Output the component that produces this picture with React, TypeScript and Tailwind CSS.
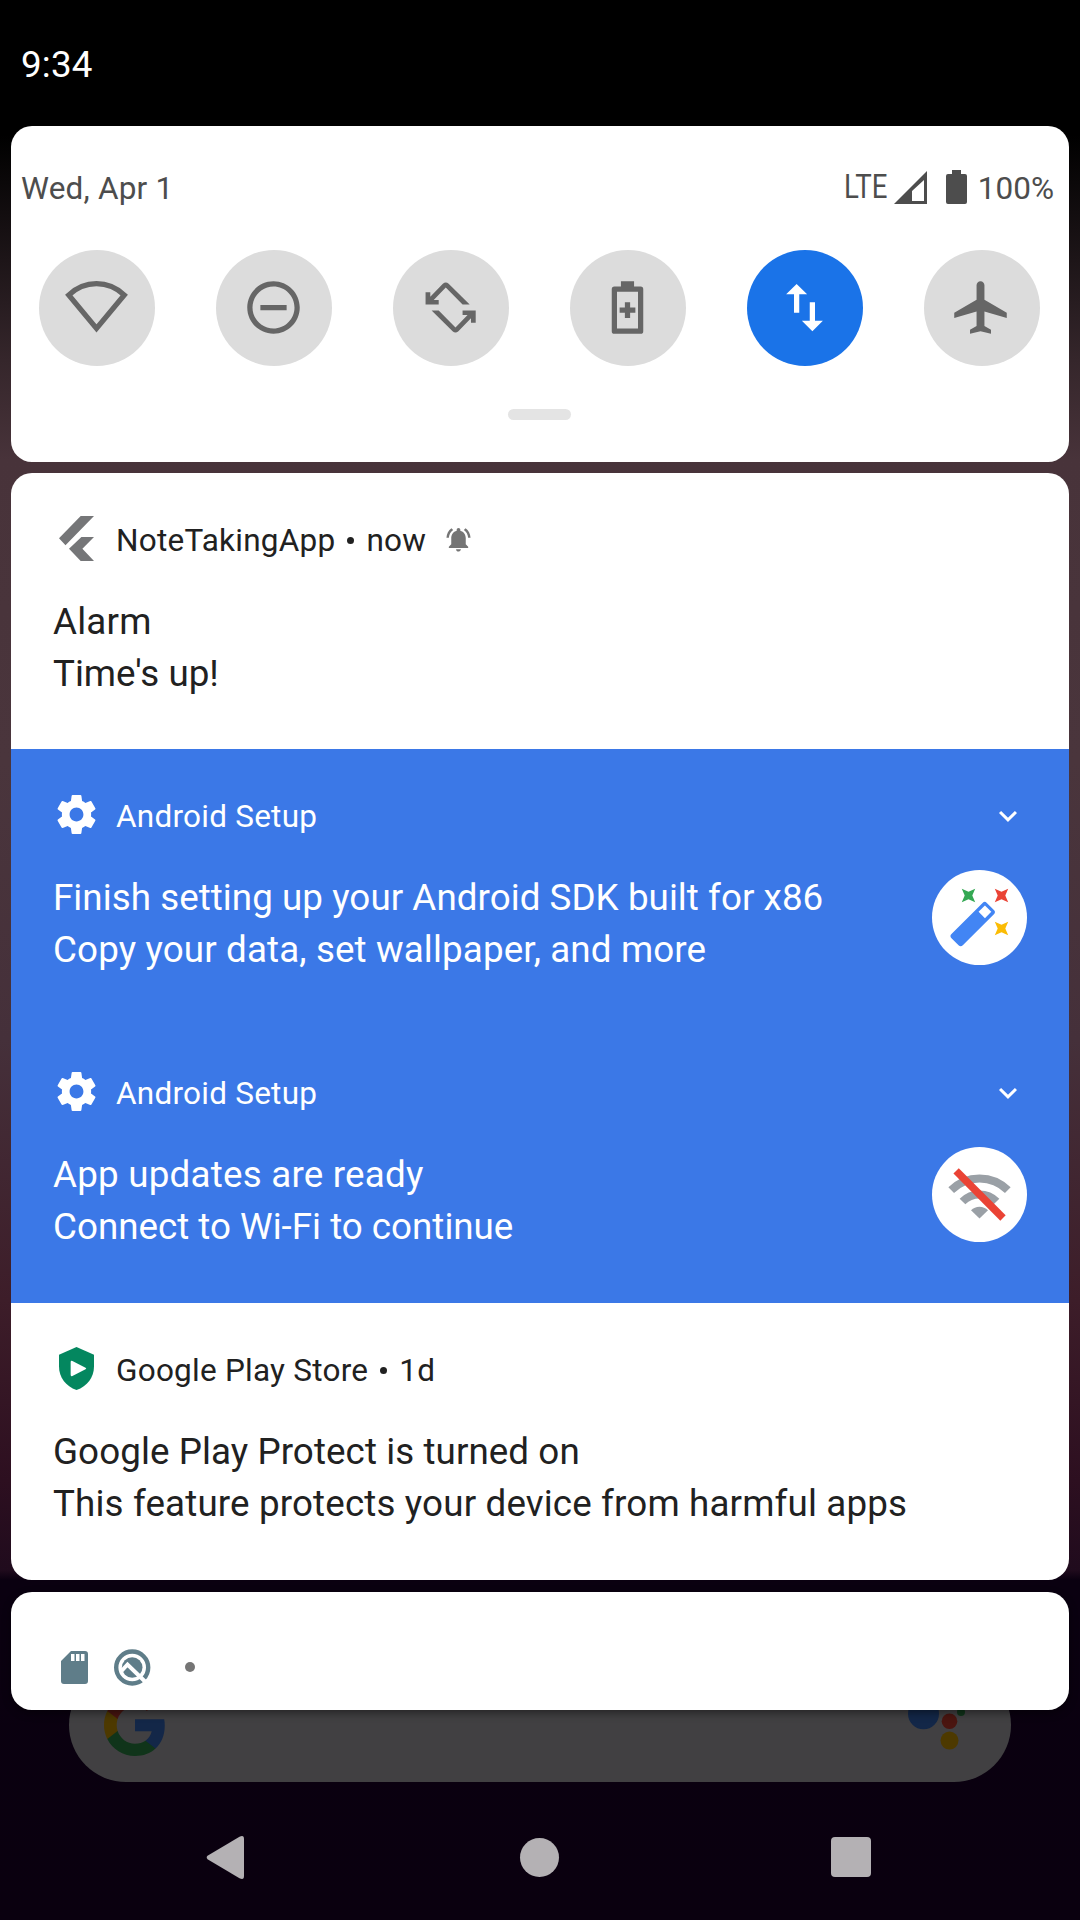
import React from "react";

function Circle({ on = false, children }: { on?: boolean; children: React.ReactNode }) {
  return (
    <div className={`flex h-[116px] w-[116px] items-center justify-center rounded-full ${on ? "bg-[#1a73e8] text-white" : "bg-[#dcdcdc] text-[#666666]"}`}>
      {children}
    </div>
  );
}

function QsIcon({ children, className = "mr-px" }: { children: React.ReactNode; className?: string }) {
  return (
    <svg viewBox="0 0 24 24" className={`mb-px h-[63px] w-[63px] ${className}`} fill="currentColor">
      {children}
    </svg>
  );
}

const ROTATE = "M2.5 6.2h1.8v1.7l4.8-4.9q1.1-1.1 2.2 0l8 7.9h-2.7l-6.4-6.5-4.6 4.7h1.9v1.8h-5z";

function QuickSettings() {
  return (
    <section className="h-[336px] rounded-[21px] bg-white">
      <div className="flex h-[124px] items-center justify-between pl-[10px] pr-[15px] text-[#4d4d4d]">
        <span className="text-[31.5px] leading-[37px] tracking-[0.2px]">Wed, Apr 1</span>
        <div className="flex items-center text-[31.5px] leading-[37px]">
          <span className="w-[44px] origin-left scale-x-[0.85] whitespace-nowrap pb-[2px] text-[32.5px]">LTE</span>
          <svg width="33" height="33" viewBox="0 0 33 33" className="mb-[2px] ml-[6px]" fill="currentColor">
            <path fillRule="evenodd" d="M0 33 33 0v33zM18 30h12V9L18 20z" />
          </svg>
          <svg width="21" height="34" viewBox="0 0 21 34" className="mb-[2px] ml-[19px] mr-[11px]" fill="currentColor">
            <path d="M6 0h9v4h4q2 0 2 2v26q0 2-2 2H2q-2 0-2-2V6q0-2 2-2h4z" />
          </svg>
          <span>100%</span>
        </div>
      </div>
      <div className="flex justify-between pl-7 pr-[29px]">
        <Circle>
          <QsIcon>
            <path d="M1.4 7.25C4.3 4.5 8 2.9 12 2.9s7.7 1.6 10.6 4.35L12 20z" fill="none" stroke="currentColor" strokeWidth="2" />
          </QsIcon>
        </Circle>
        <Circle>
          <QsIcon>
            <path d="M7 11v2h10v-2H7zm5-9C6.48 2 2 6.48 2 12s4.48 10 10 10 10-4.48 10-10S17.52 2 12 2zm0 18c-4.41 0-8-3.59-8-8s3.59-8 8-8 8 3.59 8 8-3.59 8-8 8z" />
          </QsIcon>
        </Circle>
        <Circle>
          <QsIcon>
            <path d={ROTATE} />
            <path d={ROTATE} transform="rotate(180 12.05 12)" />
          </QsIcon>
        </Circle>
        <Circle>
          <QsIcon>
            <path fillRule="evenodd" d="M9.5 2h5v2H17q1 0 1 1v16q0 1-1 1H7q-1 0-1-1V5q0-1 1-1h2.5zM8 6v14h8V6z" />
            <path d="M11 10h2v2h2v2h-2v2h-2v-2H9v-2h2z" />
          </QsIcon>
        </Circle>
        <Circle on>
          <QsIcon>
            <path d="M9 3L5 6.99h3V14h2V6.99h3L9 3zm7 14.01V10h-2v7.01h-3L15 21l4-3.99h-3z" />
          </QsIcon>
        </Circle>
        <Circle>
          <QsIcon className="mr-[3px]">
            <path d="M22 16v-2l-8.5-5V3.5C13.5 2.67 12.83 2 12 2s-1.5.67-1.5 1.5V9L2 14v2l8.5-2.5V19L8 20.5V22l4-1 4 1v-1.5L13.5 19v-5.5L22 16z" />
          </QsIcon>
        </Circle>
      </div>
      <div className="mx-auto mt-[43px] h-[11px] w-[63px] -translate-x-px rounded-full bg-[#e4e4e4]" />
    </section>
  );
}

function Gear() {
  return (
    <svg viewBox="2.4 2.4 19.2 19.2" className="mb-[2px] h-[39px] w-[39px]" fill="currentColor">
      <path d="M19.14 12.94c.04-.3.06-.61.06-.94 0-.32-.02-.64-.07-.94l2.03-1.58c.18-.14.23-.41.12-.61l-1.92-3.32c-.12-.22-.37-.29-.59-.22l-2.39.96c-.5-.38-1.03-.7-1.62-.94L14.4 2.81c-.04-.24-.24-.41-.48-.41h-3.84c-.24 0-.43.17-.47.41l-.36 2.54c-.59.24-1.13.57-1.62.94l-2.39-.96c-.22-.08-.47 0-.59.22L2.74 8.87c-.12.21-.08.47.12.61l2.03 1.58c-.05.3-.09.63-.09.94s.02.64.07.94l-2.03 1.58c-.18.14-.23.41-.12.61l1.92 3.32c.12.22.37.29.59.22l2.39-.96c.5.38 1.03.7 1.62.94l.36 2.54c.05.24.24.41.48.41h3.84c.24 0 .44-.17.47-.41l.36-2.54c.59-.24 1.13-.56 1.62-.94l2.39.96c.22.08.47 0 .59-.22l1.92-3.32c.12-.22.07-.47-.12-.61l-2.01-1.58zM12 15.4c-1.88 0-3.4-1.52-3.4-3.4s1.52-3.4 3.4-3.4 3.4 1.52 3.4 3.4-1.52 3.4-3.4 3.4z" />
    </svg>
  );
}

function FlutterMark() {
  return (
    <svg viewBox="0 0 35 45" className="mb-[2px] h-[45px] w-[35px]" fill="#757678">
      <path d="M21.7 0H35L6.5 29.3 0 22.3zM22.4 21H35L23.4 32.7 35 45H21.7L10 32.7z" />
    </svg>
  );
}

function Shield() {
  return (
    <svg viewBox="0 0 36 44" className="mb-[2px] h-[43px] w-[35px]" preserveAspectRatio="none">
      <path d="M18 0 36 8v12c0 11-7 20.5-18 24C7 40.5 0 31 0 20V8z" fill="#04875f" />
      <path d="M12 15.5q0-2 1.8-1.2l13.5 6.9q1.5.8 0 1.6l-13.5 6.9q-1.8.8-1.8-1.2z" fill="#fff" />
    </svg>
  );
}

function Bell() {
  return (
    <svg viewBox="0 0 24 24" className="mb-[2px] ml-[18px] h-[29px] w-[29px]" fill="#757575">
      <path d="M7.58 4.08L6.15 2.65C3.75 4.48 2.17 7.3 2.03 10.5h2c.15-2.65 1.51-4.97 3.55-6.42zm12.39 6.42h2c-.15-3.2-1.73-6.02-4.12-7.85l-1.42 1.43c2.02 1.45 3.39 3.77 3.54 6.42zM18 11c0-3.07-1.64-5.64-4.5-6.32V4c0-.83-.67-1.5-1.5-1.5s-1.5.67-1.5 1.5v.68C7.63 5.36 6 7.92 6 11v5l-2 2v1h16v-1l-2-2v-5zm-6 11c.14 0 .27-.01.4-.04.65-.14 1.18-.58 1.44-1.18.1-.24.15-.5.15-.78h-4c.01 1.1.9 2 2.01 2z" />
    </svg>
  );
}

function Chevron() {
  return (
    <svg viewBox="0 0 24 24" className="ml-auto mr-px mt-px h-9 w-9" fill="none" stroke="currentColor" strokeWidth="2">
      <path d="M6.7 9.3 12 14.6l5.3-5.3" />
    </svg>
  );
}

const SPARK = "M-6.7-6.7 0-3.8 6.7-6.7 3.8 0 6.7 6.7 0 3.8-6.7 6.7-3.8 0z";

function Wand() {
  return (
    <svg viewBox="0 0 95 95" className="h-[95px] w-[95px]">
      <circle cx="47.5" cy="47.5" r="47.5" fill="#fff" />
      <path d={SPARK} transform="translate(36.5 25.5)" fill="#34a853" />
      <path d={SPARK} transform="translate(69.5 25.5)" fill="#ea4335" />
      <path d={SPARK} transform="translate(69.5 58.5)" fill="#fbbc04" />
      <g transform="translate(40.7 54.1) rotate(-45)">
        <rect x="-25" y="-8" width="50" height="16" rx="3" fill="#4285f4" />
        <rect x="12.8" y="-4.5" width="9" height="9" fill="#fff" />
      </g>
    </svg>
  );
}

function WifiOff() {
  return (
    <svg viewBox="0 0 95 95" className="h-[95px] w-[95px]">
      <circle cx="47.5" cy="47.5" r="47.5" fill="#fff" />
      <g fill="none" stroke="#9aa0a6" strokeWidth="8">
        <path d="M19.2 43.2a40 40 0 0 1 56.6 0" />
        <path d="M30.5 54.5a24 24 0 0 1 34 0" />
      </g>
      <path d="M47.5 71.5 39 63.2a12 12 0 0 1 17 0z" fill="#9aa0a6" />
      <path d="M24.1 23.9 71 71" stroke="#ea4335" strokeWidth="7.5" />
    </svg>
  );
}

type NoteProps = {
  icon: React.ReactNode;
  app: string;
  time?: string;
  after?: React.ReactNode;
  title: string;
  titleClass?: string;
  text: string;
  textClass?: string;
  picture?: React.ReactNode;
  className: string;
};

function Notification({ icon, app, time, after, title, titleClass = "", text, textClass = "", picture, className }: NoteProps) {
  return (
    <article className={`px-[42px] pt-[42px] ${className}`}>
      <div className="flex h-[48px] items-center">
        <div className="-ml-px mr-[20px] flex w-[44px] justify-center pl-[4px]">{icon}</div>
        <div className="flex items-center pt-[2px] text-[31.5px] leading-[37px] tracking-[0.24px]">
          <span>{app}</span>
          {time && <span className="mx-3 h-[7px] w-[7px] rounded-full bg-[#212121]" />}
          {time && <span>{time}</span>}
          {after}
        </div>
        {picture && <Chevron />}
      </div>
      <div className="mt-[32px] flex justify-between">
        <div className="pt-px text-[36.75px] leading-[52px]">
          <p className={titleClass}>{title}</p>
          <p className={textClass}>{text}</p>
        </div>
        {picture && <div className="-mt-px">{picture}</div>}
      </div>
    </article>
  );
}

function SilentIcons() {
  return (
    <section className="flex h-[118px] items-start rounded-[21px] bg-white pl-[50px] pt-[57px] shadow-[0_3px_8px_rgba(0,0,0,0.45)]">
      <svg viewBox="0 0 27 33" className="mt-[2px] h-[33px] w-[27px]" fill="#5f7d89">
        <path fillRule="evenodd" d="M10 0h14q3 0 3 3v27q0 3-3 3H3q-3 0-3-3V10zM10 3v7h3.5V3zm5 0v7h3.5V3zm5 0v7h3.5V3z" />
      </svg>
      <svg viewBox="0 0 37 37" className="ml-[26px] h-[37px] w-[37px]">
        <circle cx="18.2" cy="18.5" r="16" fill="none" stroke="#5f7d89" strokeWidth="4.4" />
        <circle cx="18.2" cy="18.5" r="10.3" fill="#5f7d89" />
        <path d="M7.500 22 13.500 15.500 31.500 33" fill="none" stroke="#fff" strokeWidth="4" />
      </svg>
      <span className="ml-[34px] mt-[13px] h-[10px] w-[10px] rounded-full bg-[#757575]" />
    </section>
  );
}

function SearchBar() {
  return (
    <div className="-mt-[42px] ml-[68.5px] mr-[69.5px] flex h-[114px] items-center justify-between rounded-full bg-[#414042] pl-[35.5px] pr-[42.5px]">
      <svg viewBox="1 1 22 22" className="mb-px h-[62px] w-[62px]">
        <path fill="#132748" d="M22.56 12.25c0-.78-.07-1.53-.2-2.25H12v4.26h5.92c-.26 1.37-1.04 2.53-2.21 3.31v2.77h3.57c2.08-1.92 3.28-4.74 3.28-8.09z" />
        <path fill="#10341a" d="M12 23c2.97 0 5.46-.98 7.28-2.66l-3.57-2.77c-.98.66-2.23 1.06-3.71 1.06-2.86 0-5.29-1.93-6.16-4.53H2.18v2.84C3.99 20.53 7.7 23 12 23z" />
        <path fill="#4d3900" d="M5.84 14.09c-.22-.66-.35-1.36-.35-2.09s.13-1.43.35-2.09V7.07H2.18C1.43 8.55 1 10.22 1 12s.43 3.45 1.18 4.93l3.66-2.84z" />
        <path fill="#4a1510" d="M12 5.38c1.62 0 3.06.56 4.21 1.64l3.15-3.15C17.45 2.09 14.97 1 12 1 7.7 1 3.99 3.47 2.18 7.07l3.66 2.84c.87-2.6 3.3-4.53 6.16-4.53z" />
      </svg>
      <svg viewBox="0 0 62 62" className="mb-px h-[62px] w-[62px]">
        <circle cx="17.5" cy="19.7" r="15.5" fill="#132748" />
        <circle cx="43.5" cy="27.3" r="7.8" fill="#4a1510" />
        <circle cx="43.5" cy="46.6" r="9" fill="#4d3900" />
        <circle cx="55" cy="18" r="4" fill="#10341a" />
      </svg>
    </div>
  );
}

function NavBar() {
  return (
    <nav className="mt-[53px] flex h-[44px] items-center pl-[206px] text-[#b4b1b4]">
      <svg width="38" height="43" viewBox="0 0 38 43" fill="currentColor">
        <path d="M33.5.8Q38-1.500 38 3v37q0 4.500-4.500 2.200L1.500 23.200q-1.600-1.700 0-3.400z" />
      </svg>
      <div className="ml-[276px] h-[39px] w-[39px] rounded-full bg-current" />
      <div className="ml-[272px] h-[40px] w-[40px] rounded-[4px] bg-current" />
    </nav>
  );
}

export default function App() {
  return (
    <div className="h-[1920px] w-[1080px] overflow-hidden bg-[linear-gradient(180deg,#000_0px,#000_135px,#1d1518_260px,#35262b_360px,#48333a_460px,#4a353c_760px,#45303a_1040px,#3d1d29_1300px,#2d0f20_1480px,#200b1d_1570px,#0a0010_1580px,#0a000f_1920px)] font-[Roboto,sans-serif]">
      <header className="flex h-[126px] items-center bg-black pl-[21px] text-[36.75px] text-white">
        <span className="mt-[3px] tracking-[0.2px]">9:34</span>
      </header>
      <main className="relative z-10 mx-[11px] flex flex-col">
        <QuickSettings />
        <section className="mt-[11px] overflow-hidden rounded-[21px] bg-white">
          <Notification className="h-[276px] text-[#212121]" icon={<FlutterMark />} app="NoteTakingApp" time="now" after={<Bell />} title="Alarm" titleClass="tracking-[0.2px]" text="Time's up!" />
          <Notification className="h-[277px] bg-[#3b78e7] text-white" icon={<Gear />} app="Android Setup" title="Finish setting up your Android SDK built for x86" titleClass="tracking-[0.05px]" text="Copy your data, set wallpaper, and more" textClass="tracking-[0.13px]" picture={<Wand />} />
          <Notification className="h-[277px] bg-[#3b78e7] text-white" icon={<Gear />} app="Android Setup" title="App updates are ready" titleClass="tracking-[0.22px]" text="Connect to Wi-Fi to continue" picture={<WifiOff />} />
          <Notification className="h-[277px] text-[#212121]" icon={<Shield />} app="Google Play Store" time="1d" title="Google Play Protect is turned on" titleClass="tracking-[0.08px]" text="This feature protects your device from harmful apps" textClass="tracking-[0.15px]" />
        </section>
        <div className="mt-3">
          <SilentIcons />
        </div>
      </main>
      <SearchBar />
      <NavBar />
    </div>
  );
}
